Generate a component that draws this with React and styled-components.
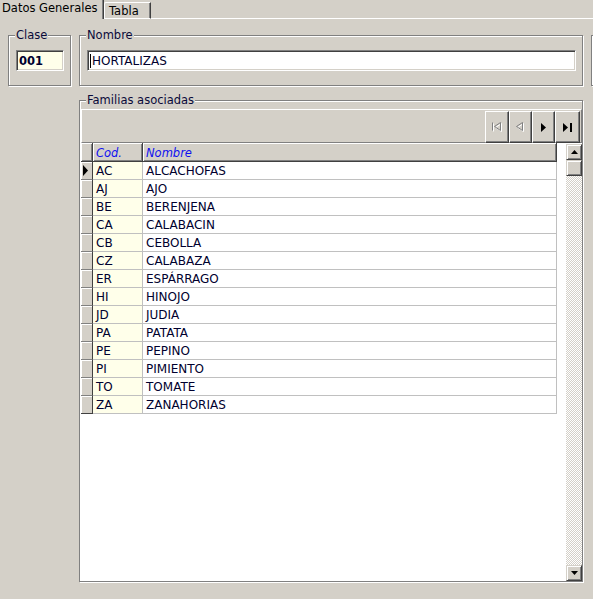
import React from "react";
import styled, { createGlobalStyle } from "styled-components";

// ---------- Global ----------
const GlobalStyle = createGlobalStyle`
  html, body {
    margin: 0;
    padding: 0;
    background: #d4d0c8;
  }
  body {
    font-family: "DejaVu Sans", Verdana, sans-serif;
    font-size: 11.5px;
    color: #000;
    overflow: hidden;
  }
`;

const Window = styled.div`
  width: 593px;
  height: 599px;
  overflow: hidden;
  background: #d4d0c8;
`;

// ---------- Tabs ----------
const TabStrip = styled.div`
  display: flex;
  align-items: flex-end;
  height: 19px;
`;

const Tab = styled.div`
  box-sizing: border-box;
  height: ${({ active }) => (active ? "19px" : "17px")};
  padding: ${({ active }) => (active ? "2px 0 0 2px" : "2px 0 0 4px")};
  width: ${({ w }) => w}px;
  line-height: 13px;
  white-space: nowrap;
  border-right: 1px solid #404040;
  border-top: ${({ active }) => (active ? "none" : "1px solid #fff")};
  border-left: ${({ active }) => (active ? "none" : "1px solid #fff")};
  border-bottom: ${({ active }) => (active ? "none" : "1px solid #fff")};
  border-top-left-radius: ${({ active }) => (active ? "0" : "2px")};
  box-shadow: inset -1px 0 0 #808080;
`;

const TabFiller = styled.div`
  flex: 1;
  height: 1px;
  background: #fff;
`;

// ---------- Page ----------
const Page = styled.div`
  display: grid;
  grid-template-columns: 63px 504px 100px;
  grid-template-rows: 51px 482px;
  column-gap: 8px;
  row-gap: 14px;
  padding: 16px 0 0 8px;
`;

const Group = styled.div`
  position: relative;
  box-sizing: border-box;
  border: 1px solid #808080;
  box-shadow: inset 1px 1px 0 #fff, 1px 1px 0 #fff;
  padding: ${({ pad }) => pad || "0"};
  grid-column: ${({ col }) => col || "auto"};
  display: flex;
  flex-direction: column;
`;

const Legend = styled.span`
  position: absolute;
  top: -7px;
  left: 6px;
  padding: 0 1px;
  line-height: 13px;
  background: #d4d0c8;
  color: #0a0a3a;
  white-space: nowrap;
`;

const EditBox = styled.div`
  box-sizing: border-box;
  height: 21px;
  width: ${({ w }) => w}px;
  display: flex;
  align-items: center;
  background: ${({ bg }) => bg || "#fff"};
  border-top: 1px solid #808080;
  border-left: 1px solid #808080;
  border-bottom: 1px solid #fff;
  border-right: 1px solid #fff;
  box-shadow: inset 1px 1px 0 #404040, inset -1px -1px 0 #d4d0c8;
  padding: 1px 0 0 2px;
  color: #00002e;
  font-size: ${({ bold }) => (bold ? "11.5px" : "12px")};
  font-weight: ${({ bold }) => (bold ? "bold" : "normal")};
  line-height: 17px;
  white-space: nowrap;
`;

const Caret = styled.span`
  display: inline-block;
  width: 1px;
  height: 14px;
  margin-right: 1px;
  background: #000;
`;

// ---------- Toolbar / navigator ----------
const ToolPanel = styled.div`
  box-sizing: border-box;
  height: 34px;
  margin-left: 1px;
  padding: 1px 1px 1px 0;
  display: flex;
  justify-content: flex-end;
  border-top: 1px solid #fff;
  border-left: 1px solid #fff;
  border-bottom: 1px solid #808080;
  border-right: 1px solid #808080;
`;

const NavButton = styled.div`
  box-sizing: border-box;
  width: ${({ w }) => w || 23}px;
  height: 32px;
  display: flex;
  align-items: center;
  justify-content: center;
  background: #d4d0c8;
  border-top: 1px solid #fff;
  border-left: 1px solid #fff;
  border-right: 1px solid #404040;
  border-bottom: 1px solid #404040;
  box-shadow: inset -1px -1px 0 #808080;
`;

// ---------- Grid ----------
const GridWrap = styled.div`
  flex: 1;
  display: flex;
  margin-left: 1px;
  background: #fff;
`;

const DataArea = styled.div`
  width: 485px;
  display: flex;
  flex-direction: column;
`;

const Row = styled.div`
  display: flex;
  height: ${({ h }) => h}px;
`;

const HeadCell = styled.div`
  box-sizing: border-box;
  width: ${({ w }) => w}px;
  height: 19px;
  padding: 2px 0 0 3px;
  line-height: 16px;
  background: #d4d0c8;
  color: #1010f0;
  font-style: italic;
  border-right: 1px solid #404040;
  border-bottom: 1px solid #404040;
  box-shadow: inset 1px 1px 0 #fff, inset -1px -1px 0 #808080;
`;

const Indicator = styled.div`
  box-sizing: border-box;
  width: 12px;
  height: 18px;
  display: flex;
  align-items: center;
  padding-left: 2px;
  background: #d4d0c8;
  border-right: 1px solid #404040;
  border-bottom: 1px solid ${({ last }) => (last ? "#404040" : "#808080")};
  box-shadow: inset 1px 1px 0 #fff;
`;

const Cell = styled.div`
  box-sizing: border-box;
  width: ${({ w }) => w}px;
  height: 18px;
  padding: 1px 0 0 3px;
  line-height: 16px;
  font-size: 12px;
  background: ${({ bg }) => bg || "#fff"};
  color: #00002e;
  border-right: 1px solid #c0c0c0;
  border-bottom: 1px solid #c0c0c0;
  white-space: nowrap;
`;

// ---------- Scrollbar ----------
const ScrollBar = styled.div`
  width: 16px;
  margin: 1px 0 0 0;
  display: flex;
  flex-direction: column;
  background: repeating-conic-gradient(#d4d0c8 0 25%, #fff 0 50%) 0 0 / 2px 2px;
`;

const ScrollButton = styled.div`
  box-sizing: border-box;
  width: 16px;
  height: 16px;
  display: flex;
  align-items: center;
  justify-content: center;
  background: #d4d0c8;
  border-top: 1px solid #d4d0c8;
  border-left: 1px solid #d4d0c8;
  border-right: 1px solid #404040;
  border-bottom: 1px solid #404040;
  box-shadow: inset 1px 1px 0 #fff, inset -1px -1px 0 #808080;
`;

const Track = styled.div`
  flex: 1;
`;

// ---------- Icons ----------
const FirstIcon = () => (
  <svg width="12" height="11" viewBox="0 0 12 11">
    <g fill="none" stroke="#fff" strokeWidth="1" transform="translate(1 1)">
      <path d="M1.5 0.5v8" />
      <path d="M9.5 0.5L3.5 4.5L9.5 8.5Z" />
    </g>
    <g fill="none" stroke="#808080" strokeWidth="1">
      <path d="M1.5 0.5v8" />
      <path d="M9.5 0.5L3.5 4.5L9.5 8.5Z" />
    </g>
  </svg>
);

const PriorIcon = () => (
  <svg width="10" height="11" viewBox="0 0 10 11">
    <path d="M7.5 1.5L1.5 5.5L7.5 9.5Z" fill="none" stroke="#fff" />
    <path d="M6.5 0.5L0.5 4.5L6.5 8.5Z" fill="none" stroke="#808080" />
  </svg>
);

const NextIcon = () => (
  <svg width="6" height="9" viewBox="0 0 6 9">
    <path d="M0 0L5 4.5L0 9Z" fill="#000" />
  </svg>
);

const LastIcon = () => (
  <svg width="10" height="9" viewBox="0 0 10 9">
    <path d="M0 0L5 4.5L0 9Z" fill="#000" />
    <rect x="7" y="0" width="2" height="9" fill="#000" />
  </svg>
);

const RowArrow = () => (
  <svg width="6" height="11" viewBox="0 0 6 11">
    <path d="M0 0L5 5.5L0 11Z" fill="#000" />
  </svg>
);

const ArrowUp = () => (
  <svg width="7" height="4" viewBox="0 0 7 4">
    <path d="M3.5 0L7 4H0Z" fill="#000" />
  </svg>
);

const ArrowDown = () => (
  <svg width="7" height="4" viewBox="0 0 7 4">
    <path d="M0 0H7L3.5 4Z" fill="#000" />
  </svg>
);

// ---------- Data ----------
const familias = [
  ["AC", "ALCACHOFAS"],
  ["AJ", "AJO"],
  ["BE", "BERENJENA"],
  ["CA", "CALABACIN"],
  ["CB", "CEBOLLA"],
  ["CZ", "CALABAZA"],
  ["ER", "ESPÁRRAGO"],
  ["HI", "HINOJO"],
  ["JD", "JUDIA"],
  ["PA", "PATATA"],
  ["PE", "PEPINO"],
  ["PI", "PIMIENTO"],
  ["TO", "TOMATE"],
  ["ZA", "ZANAHORIAS"],
];

// ---------- App ----------
const App = () => {
  return (
    <Window>
      <GlobalStyle />
      <TabStrip>
        <Tab active w={104}>Datos Generales</Tab>
        <Tab w={47}>Tabla</Tab>
        <TabFiller />
      </TabStrip>

      <Page>
        <Group pad="14px 0 0 7px">
          <Legend>Clase</Legend>
          <EditBox w={48} bg="#ffffea" bold>001</EditBox>
        </Group>

        <Group pad="14px 0 0 7px">
          <Legend>Nombre</Legend>
          <EditBox w={489}>
            <Caret />
            HORTALIZAS
          </EditBox>
        </Group>

        <Group />

        <Group col="2" pad="8px 0 0 0">
          <Legend>Familias asociadas</Legend>
          <ToolPanel>
            <NavButton w={24}><FirstIcon /></NavButton>
            <NavButton><PriorIcon /></NavButton>
            <NavButton><NextIcon /></NavButton>
            <NavButton w={25}><LastIcon /></NavButton>
          </ToolPanel>

          <GridWrap>
            <DataArea>
              <Row h={19}>
                <HeadCell w={12} />
                <HeadCell w={50}>Cod.</HeadCell>
                <HeadCell w={414}>Nombre</HeadCell>
              </Row>
              {familias.map(([cod, nombre], i) => (
                <Row h={18} key={cod}>
                  <Indicator last={i === familias.length - 1}>
                    {i === 0 && <RowArrow />}
                  </Indicator>
                  <Cell w={50} bg="#ffffea">{cod}</Cell>
                  <Cell w={414}>{nombre}</Cell>
                </Row>
              ))}
            </DataArea>
            <ScrollBar>
              <ScrollButton><ArrowUp /></ScrollButton>
              <ScrollButton />
              <Track />
              <ScrollButton><ArrowDown /></ScrollButton>
            </ScrollBar>
          </GridWrap>
        </Group>
      </Page>
    </Window>
  );
};

export default App;
